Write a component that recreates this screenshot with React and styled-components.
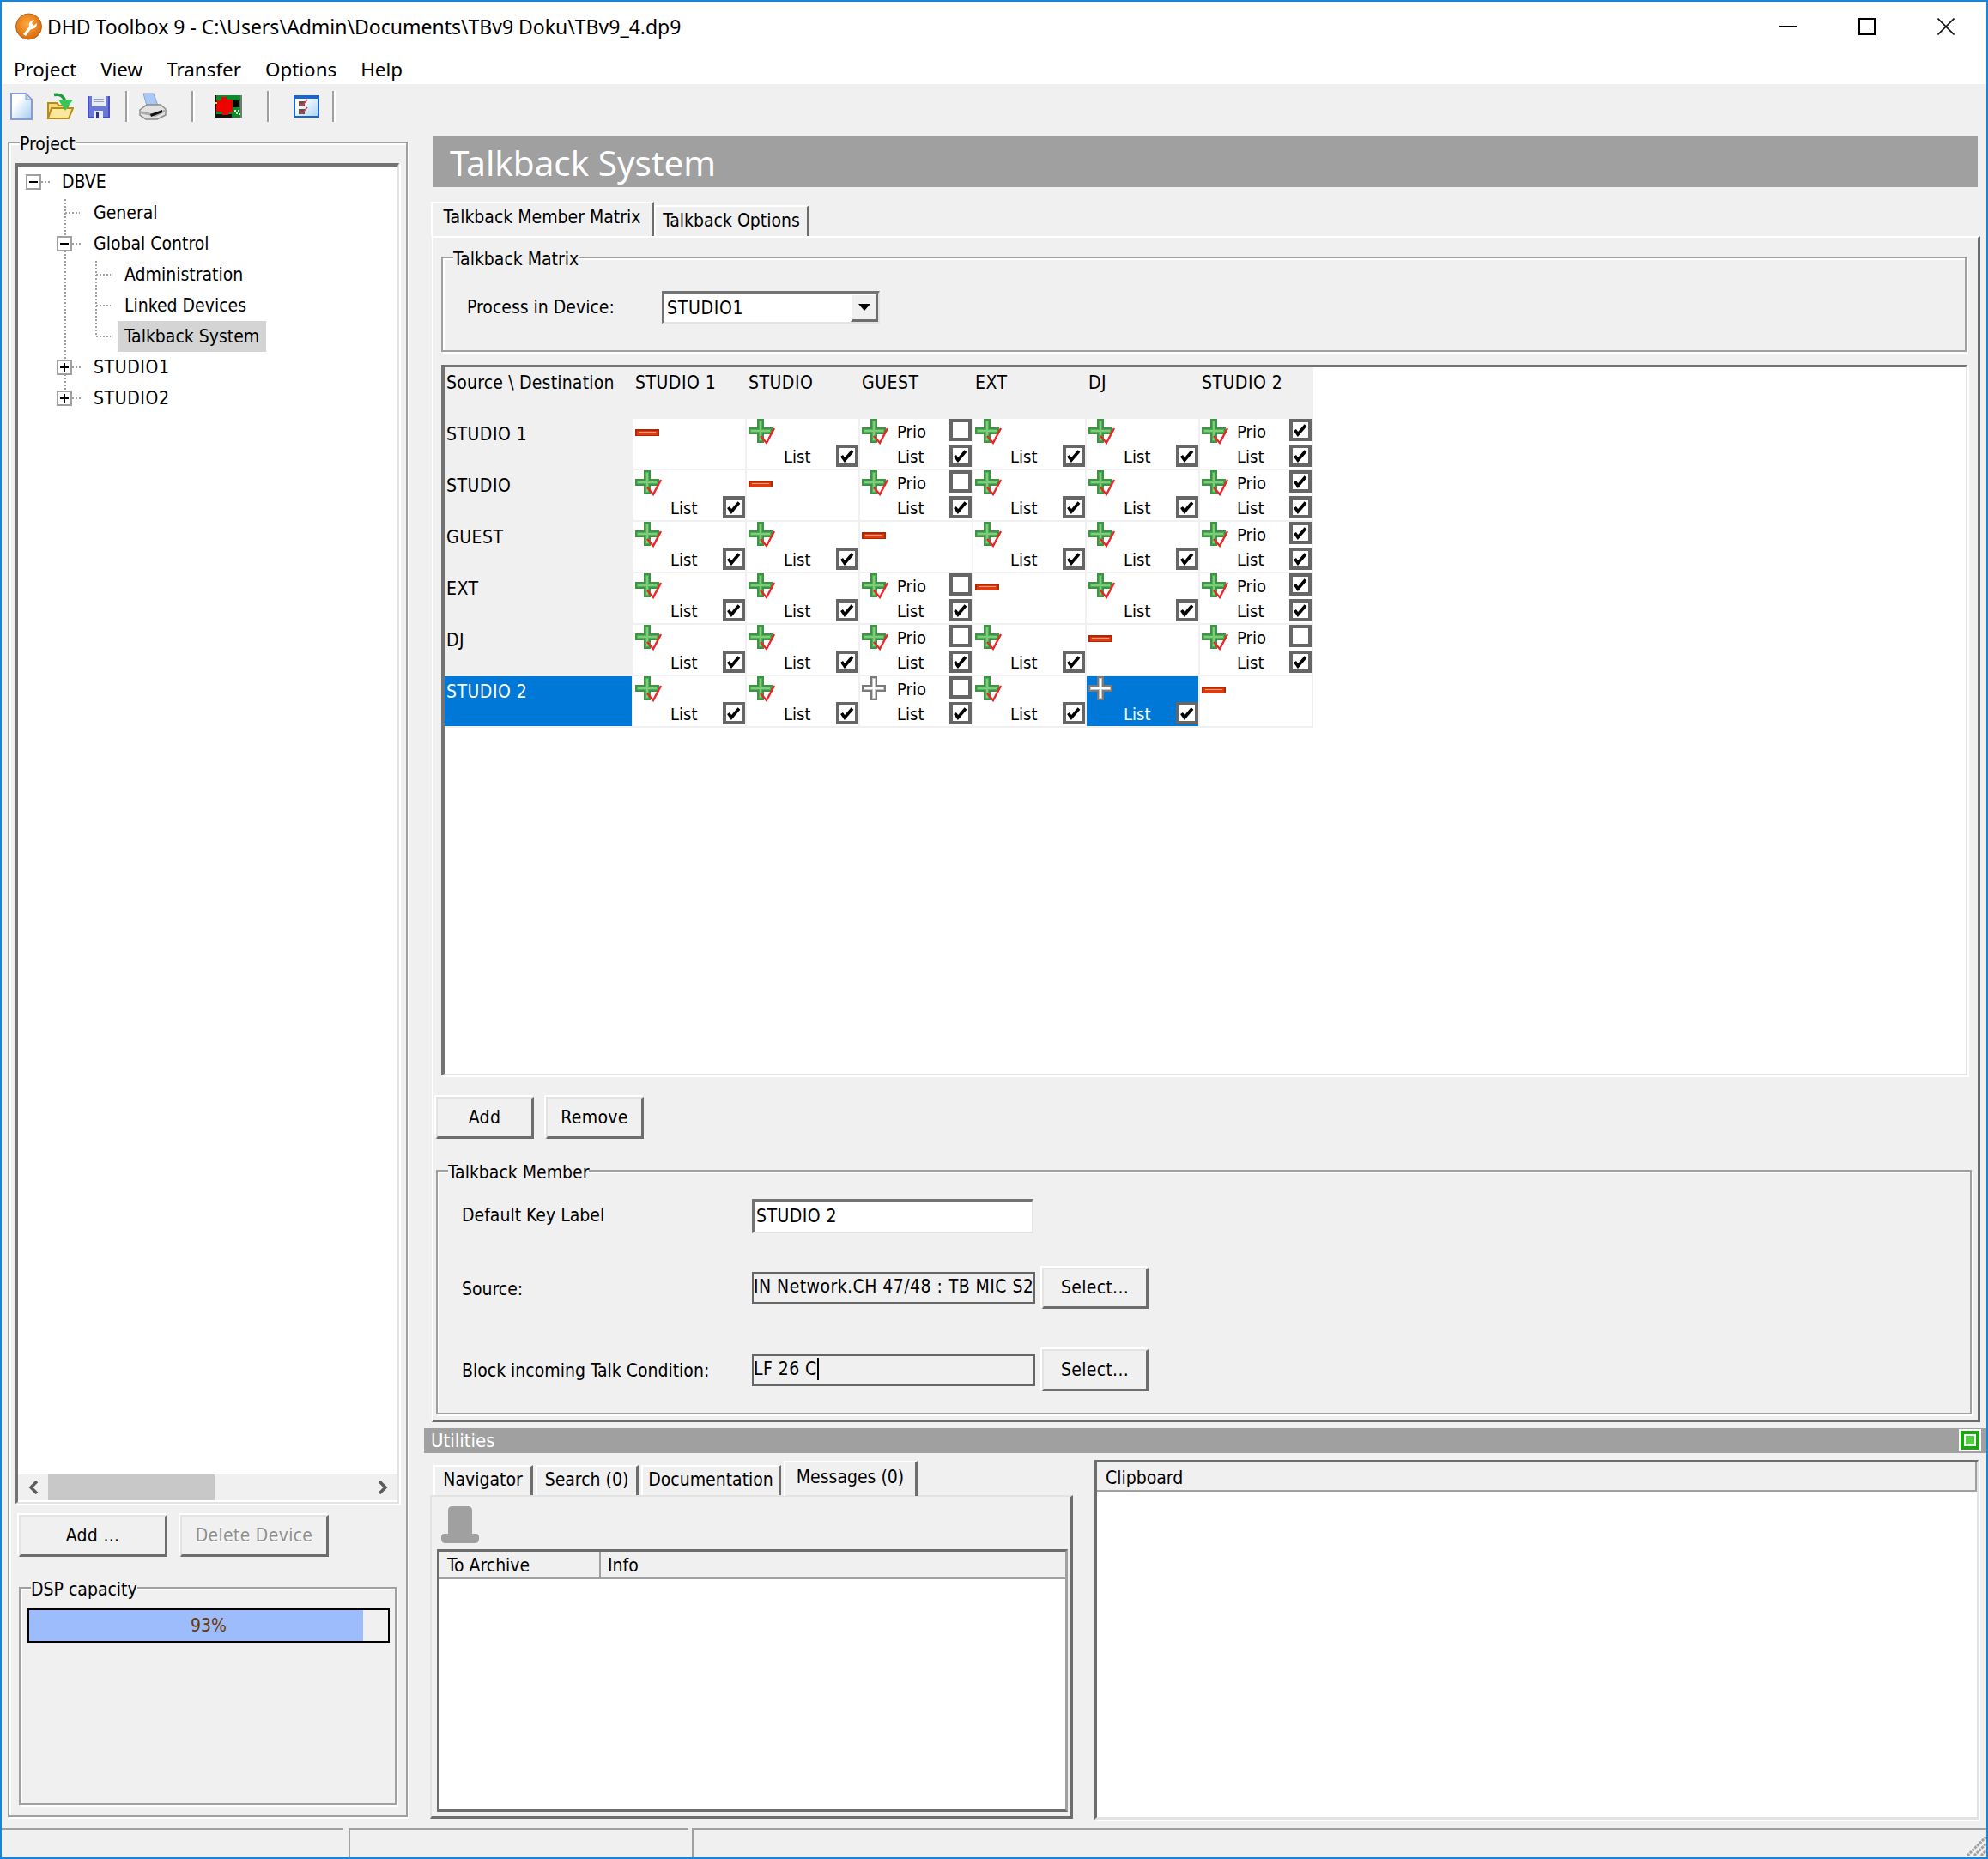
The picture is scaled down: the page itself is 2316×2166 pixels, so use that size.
import React from 'react';
import styled, { createGlobalStyle } from 'styled-components';

const GlobalStyle = createGlobalStyle`
  html, body { margin: 0; background: #f0f0f0; }
  * { box-sizing: border-box; }
  #root { width: 2316px; height: 2166px; }
`;

const Frame = styled.div`
  width: 2316px;
  height: 2166px;
  border: 2px solid #1a84d8;
  background: #f0f0f0;
  display: flex;
  flex-direction: column;
  font-family: "DejaVu Sans Condensed", "DejaVu Sans", "Noto Sans", sans-serif;
  font-size: 21px;
  color: #000;
  overflow: hidden;
`;

const TitleBar = styled.div`
  height: 62px;
  background: #fff;
  display: flex;
  align-items: center;
  padding: 0 37px 4px 16px;
  font-family: "Noto Sans", sans-serif;
  font-size: 23px;
`;
const TitleText = styled.span`
  margin-left: 6px;
  white-space: nowrap;
`;
const WinControls = styled.div`
  margin-left: auto;
  display: flex;
  gap: 72px;
`;
const MenuBar = styled.div`
  height: 34px;
  background: #fff;
  display: flex;
  align-items: center;
  gap: 28px;
  padding-left: 14px;
  font-family: "Noto Sans", sans-serif;
  font-size: 22.4px;
`;
const Toolbar = styled.div`
  height: 56px;
  display: flex;
  align-items: center;
  gap: 16px;
  padding: 0 0 4px 10px;
`;
const ToolSep = styled.span`
  width: 2px;
  height: 36px;
  background: #a0a0a0;
  box-shadow: 2px 0 0 #fff;
  margin-left: ${(p) => p.$ml || 0}px;
  margin-right: ${(p) => p.$mr || 0}px;
`;

const Body = styled.div`
  height: 1976px;
  display: flex;
`;
const LeftPane = styled.div`
  width: 492px;
  padding: 11px 0 0 7px;
`;
const RightPane = styled.div`
  width: 1820px;
  padding-top: 4px;
`;

const Group = styled.div`
  position: relative;
  width: ${(p) => p.$w}px;
  height: ${(p) => p.$h}px;
  margin: ${(p) => p.$m || '0'};
  padding: ${(p) => p.$p || '0'};
  border: 2px solid #a0a0a0;
  box-shadow: 2px 2px 0 #fff, inset 2px 2px 0 #fff;
`;
const Legend = styled.span`
  position: absolute;
  top: -12px;
  left: ${(p) => p.$left || 12}px;
  background: #f0f0f0;
  line-height: 26px;
  white-space: nowrap;
`;

const TreeBox = styled.div`
  width: 447px;
  height: 1562px;
  display: flex;
  flex-direction: column;
  border-style: solid;
  border-width: 4px 2px 2px 3px;
  border-color: #737373 #e3e3e3 #e3e3e3 #737373;
  box-shadow: 2px 2px 0 #fff;
  background: #fff;
`;
const TreeList = styled.div`
  position: relative;
  flex: 1;
`;
const TreeLines = styled.svg`
  position: absolute;
  left: 0;
  top: 0;
`;
const TreeRow = styled.div`
  position: relative;
  height: 36px;
  display: flex;
  align-items: center;
  padding-left: ${(p) => p.$indent}px;
`;
const Expander = styled.span`
  position: relative;
  flex: none;
  width: 18px;
  height: 18px;
  margin-left: ${(p) => -p.$back}px;
  margin-right: ${(p) => p.$back - 18}px;
  border: 2px solid #a0a0a0;
  background: #fff;
  &::before {
    content: '';
    position: absolute;
    left: 2px;
    top: 6px;
    width: 10px;
    height: 2px;
    background: #000;
  }
  &::after {
    content: '';
    display: ${(p) => (p.$open ? 'none' : 'block')};
    position: absolute;
    left: 6px;
    top: 2px;
    width: 2px;
    height: 10px;
    background: #000;
  }
`;
const TreeLabel = styled.span`
  position: relative;
  padding: 0 8px;
  line-height: 36px;
  letter-spacing: ${(p) => (p.$caps ? 0.6 : 0)}px;
  background: ${(p) => (p.$active ? '#d4d4d4' : 'transparent')};
`;
const HScroll = styled.div`
  height: 30px;
  margin-bottom: 2px;
  background: #f0f0f0;
  display: flex;
  align-items: center;
`;
const ScrollArrow = styled.span`
  flex: none;
  width: 35px;
  display: flex;
  justify-content: center;
`;
const ScrollThumb = styled.span`
  width: 194px;
  height: 30px;
  background: #c8c8c8;
`;
const ScrollRest = styled.span`
  flex: 1;
`;

const Button = styled.div`
  width: ${(p) => p.$w}px;
  height: ${(p) => p.$h || 49}px;
  display: flex;
  align-items: center;
  justify-content: center;
  letter-spacing: 0.3px;
  background: #f0f0f0;
  border-style: solid;
  border-width: 2px 3px 3px 2px;
  border-color: #e3e3e3 #6d6d6d #6d6d6d #e3e3e3;
  box-shadow: -2px -2px 0 #fff;
  color: ${(p) => (p.$disabled ? '#8f8f8f' : '#000')};
  text-shadow: ${(p) => (p.$disabled ? '1px 1px 0 #fff' : 'none')};
`;
const ButtonRow = styled.div`
  display: flex;
  gap: ${(p) => p.$gap}px;
  margin: ${(p) => p.$m};
`;

const Progress = styled.div`
  position: relative;
  width: 422px;
  height: 40px;
  border: 2px solid #000;
  background: #f0f0f0;
  display: flex;
  align-items: center;
  justify-content: center;
`;
const ProgressFill = styled.span`
  position: absolute;
  left: 0;
  top: 0;
  bottom: 0;
  background: #9cbcfc;
`;
const ProgressText = styled.span`
  position: relative;
  color: #6b3a00;
`;

const Heading = styled.div`
  height: 60px;
  margin: 0 10px;
  background: #a0a0a0;
  color: #fff;
  display: flex;
  align-items: center;
  padding: 4px 0 0 20px;
  font-family: "Noto Sans", sans-serif;
  font-size: 40.4px;
`;
const TabBar = styled.div`
  display: flex;
  align-items: flex-end;
  height: ${(p) => p.$h}px;
  margin: ${(p) => p.$m};
  gap: ${(p) => p.$gap || 0}px;
`;
const Tab = styled.div`
  height: ${(p) => p.$h}px;
  width: ${(p) => p.$w}px;
  display: flex;
  align-items: center;
  justify-content: center;
  padding-bottom: ${(p) => (p.$raised ? 5 : 2)}px;
  white-space: nowrap;
  border-style: solid;
  border-width: 2px 3px 0 2px;
  border-color: #fff #6d6d6d #fff #fff;
  margin-bottom: ${(p) => (p.$up ? -1 : 0)}px;
  position: relative;
`;
const TabPanel = styled.div`
  width: 1804px;
  height: 1382px;
  margin-left: 9px;
  padding: 22px 0 0 9px;
  border-style: solid;
  border-width: 2px 3px 3px 2px;
  border-color: #fff #6d6d6d #6d6d6d #fff;
`;
const FormRow = styled.div`
  display: flex;
  align-items: center;
  height: ${(p) => p.$h}px;
  padding-left: ${(p) => p.$left}px;
  margin-top: ${(p) => p.$top}px;
`;
const FieldLabel = styled.span`
  width: ${(p) => p.$w}px;
  flex: none;
  position: relative;
  top: ${(p) => p.$dy || 0}px;
`;
const Combo = styled.div`
  width: 254px;
  height: 38px;
  display: flex;
  background: #fff;
  border-style: solid;
  border-width: 3px 2px 2px 3px;
  border-color: #737373 #e3e3e3 #e3e3e3 #737373;
`;
const ComboText = styled.span`
  flex: 1;
  padding-left: 3px;
  line-height: 34px;
  letter-spacing: 0.7px;
`;
const ComboButton = styled.span`
  width: 32px;
  display: flex;
  align-items: center;
  justify-content: center;
  background: #f0f0f0;
  border-style: solid;
  border-width: 2px 3px 3px 2px;
  border-color: #fff #6d6d6d #6d6d6d #fff;
  &::after {
    content: '';
    border-style: solid;
    border-width: 8px 7px 0;
    border-color: #000 transparent transparent;
  }
`;

const MatrixBox = styled.div`
  width: 1778px;
  height: 828px;
  margin-top: 15px;
  background: #fff;
  border-style: solid;
  border-width: 3px 2px 2px 4px;
  border-color: #737373 #e3e3e3 #e3e3e3 #737373;
  box-shadow: 2px 2px 0 #fff;
`;
const MatrixGrid = styled.div`
  display: inline-grid;
  grid-template-columns: 218px repeat(6, 130px);
  grid-auto-rows: 58px;
  gap: 2px;
  padding: 0 2px 2px 0;
  background: #f0f0f0;
`;
const HeadCell = styled.div`
  background: ${(p) => (p.$selected ? '#0078d7' : '#f0f0f0')};
  color: ${(p) => (p.$selected ? '#fff' : '#000')};
  padding-left: 2px;
  line-height: 36px;
  letter-spacing: ${(p) => (p.$tight ? 0.2 : 0.5)}px;
  white-space: nowrap;
`;
const MemberCell = styled.div`
  display: grid;
  grid-template-columns: 43px 1fr 26px;
  grid-template-rows: 30px 28px;
  background: ${(p) => (p.$selected ? '#0078d7' : '#fff')};
  color: ${(p) => (p.$selected ? '#fff' : '#000')};
`;
const CellLabel = styled.span`
  align-self: center;
  font-size: 20px;
  line-height: 28px;
`;
const CheckBox = styled.span`
  width: 26px;
  height: 26px;
  align-self: start;
  border: 4px solid #666;
  background: #fff;
  display: flex;
`;

const TextField = styled.div`
  flex: none;
  width: ${(p) => (p.$plain ? 328 : 330)}px;
  height: ${(p) => (p.$plain ? 40 : 37)}px;
  margin-right: 8px;
  padding: ${(p) => (p.$plain ? '0 0 0 2px' : '0 0 3px 0')};
  display: flex;
  align-items: center;
  white-space: nowrap;
  overflow: hidden;
  letter-spacing: 0.45px;
  background: ${(p) => (p.$plain ? '#fff' : '#f0f0f0')};
  border-style: solid;
  border-width: ${(p) => (p.$plain ? '3px 2px 2px 3px' : '2px')};
  border-color: ${(p) => (p.$plain ? '#737373 #e3e3e3 #e3e3e3 #737373' : '#666')};
`;
const Caret = styled.span`
  width: 2px;
  height: 26px;
  background: #000;
`;

const UtilBar = styled.div`
  height: 29px;
  margin-top: 7px;
  padding: 0 6px 0 8px;
  background: #a0a0a0;
  color: #fff;
  display: flex;
  align-items: center;
  justify-content: space-between;
  font-size: 22px;
`;
const BottomRow = styled.div`
  display: flex;
  gap: 25px;
  margin: 8px 0 0 7px;
`;
const UtilWidget = styled.div`
  width: 749px;
`;
const UtilPanel = styled.div`
  height: 377px;
  display: flex;
  flex-direction: column;
  padding: 11px 0 5px 6px;
  border-style: solid;
  border-width: 2px 3px 3px 2px;
  border-color: #e3e3e3 #6d6d6d #6d6d6d #e3e3e3;
`;
const ArchiveIcon = styled.svg`
  flex: none;
  margin-left: 5px;
`;
const ListBox = styled.div`
  width: 735px;
  flex: 1;
  margin-top: 7px;
  background: #fff;
  border-style: solid;
  border-width: 3px;
  border-color: #6d6d6d #a0a0a0 #6d6d6d #6d6d6d;
`;
const ListHead = styled.div`
  height: 32px;
  display: flex;
  background: #f0f0f0;
  border-bottom: 2px solid #a0a0a0;
`;
const ListCol = styled.span`
  width: ${(p) => p.$w || 'auto'};
  flex: ${(p) => (p.$w ? 'none' : 1)};
  padding-left: ${(p) => p.$pad}px;
  line-height: 32px;
  border-right: ${(p) => (p.$w ? '2px solid #a0a0a0' : 'none')};
`;
const ClipboardBox = styled.div`
  width: 1030px;
  height: 419px;
  background: #fff;
  border-style: solid;
  border-width: 3px 2px 3px 3px;
  border-color: #6d6d6d #e3e3e3 #e3e3e3 #6d6d6d;
  box-shadow: 2px 2px 0 #fff;
`;
const ClipboardHead = styled.div`
  height: 34px;
  padding-left: 10px;
  line-height: 36px;
  background: #f0f0f0;
  border-style: solid;
  border-width: 0 2px 2px 0;
  border-color: #a0a0a0;
`;

const StatusBar = styled.div`
  position: relative;
  height: 34px;
  display: flex;
  margin-top: 2px;
`;
const StatusPane = styled.div`
  width: ${(p) => p.$w}px;
  margin-right: ${(p) => p.$mr || 0}px;
  border-top: 2px solid #a0a0a0;
  border-left: ${(p) => (p.$first ? 'none' : '2px solid #a0a0a0')};
`;
const Grip = styled.svg`
  position: absolute;
  right: 0;
  bottom: 2px;
`;

const TickMark = () => (
  <svg width="18" height="18" viewBox="0 0 18 18">
    <path d="M2.5 9l3.5 5L15 3.5" fill="none" stroke="#000" strokeWidth="3.6" />
  </svg>
);

const Check = ({ on, row, col }) => (
  <CheckBox style={{ gridRow: row, gridColumn: col }}>{on && <TickMark />}</CheckBox>
);

const PlusIcon = ({ gray }) => {
  const dark = gray ? '#7a7a7a' : '#3d9444';
  const mid = gray ? '#c4c4c4' : '#55ad58';
  const light = gray ? '#fff' : '#7fcc7c';
  return (
    <svg width="32" height="30" viewBox="0 0 32 30" shapeRendering="crispEdges" style={{ marginLeft: 2, gridRow: 1, gridColumn: 1 }}>
      <path d="M10 0h8v10h10v8H18v10h-8V18H0v-8h10z" fill={dark} />
      <path d="M12 2h4v10h10v4H16v10h-4V16H2v-4h10z" fill={mid} />
      <path d="M13 3h2v10h10v2H15v10h-2V15H3v-2h10z" fill={light} />
      {!gray && <path d="M14 20l7 8 9-17" fill="none" stroke="#ee2428" strokeWidth="2.4" shapeRendering="auto" />}
    </svg>
  );
};

const MinusIcon = () => (
  <svg width="28" height="8" viewBox="0 0 28 8" shapeRendering="crispEdges" style={{ margin: '12px 0 0 2px', gridRow: 1, gridColumn: 1 }}>
    <rect x="0" y="0" width="28" height="8" fill="#a82a08" />
    <rect x="2" y="2" width="24" height="5" fill="#e03a10" />
    <rect x="4" y="3" width="20" height="1" fill="#ff9a80" />
  </svg>
);

// kind: off = minus, list = plus + list, prio = plus + prio + list
const Member = ({ kind, prio, gray, selected }) => {
  if (kind === 'off') {
    return (
      <MemberCell>
        <MinusIcon />
      </MemberCell>
    );
  }
  return (
    <MemberCell $selected={selected}>
      <PlusIcon gray={gray} />
      {kind === 'prio' && (
        <>
          <CellLabel style={{ gridRow: 1, gridColumn: 2 }}>Prio</CellLabel>
          <Check on={prio} row={1} col={3} />
        </>
      )}
      <CellLabel style={{ gridRow: 2, gridColumn: 2 }}>List</CellLabel>
      <Check on row={2} col={3} />
    </MemberCell>
  );
};

const columns = ['STUDIO 1', 'STUDIO', 'GUEST', 'EXT', 'DJ', 'STUDIO 2'];
const L = { kind: 'list' };
const P = { kind: 'prio', prio: true };
const U = { kind: 'prio', prio: false };
const O = { kind: 'off' };
const rows = [
  { name: 'STUDIO 1', cells: [O, L, U, L, L, P] },
  { name: 'STUDIO', cells: [L, O, U, L, L, P] },
  { name: 'GUEST', cells: [L, L, O, L, L, P] },
  { name: 'EXT', cells: [L, L, U, O, L, P] },
  { name: 'DJ', cells: [L, L, U, L, O, U] },
  {
    name: 'STUDIO 2',
    selected: true,
    cells: [L, L, { ...U, gray: true }, L, { kind: 'list', gray: true, selected: true }, O],
  },
];

const AppIcon = () => (
  <svg width="31" height="32" viewBox="0 0 31 32">
    <defs>
      <radialGradient id="appGlow" cx="45%" cy="40%" r="60%">
        <stop offset="0" stopColor="#ffab3c" />
        <stop offset="1" stopColor="#dd6a10" />
      </radialGradient>
    </defs>
    <circle cx="15.5" cy="16" r="15" fill="url(#appGlow)" stroke="#a8691f" />
    <path d="M9 25l7-9c-1-4 1-7 6-8l-3 4 2 3 4-3c0 5-3 7-7 7l-6 8z" fill="#fff" />
  </svg>
);

const NewIcon = () => (
  <svg width="26" height="32" viewBox="0 0 26 32">
    <defs>
      <linearGradient id="docFill" x1="0" y1="0" x2="1" y2="1">
        <stop offset="0.3" stopColor="#fff" />
        <stop offset="1" stopColor="#9fcdf0" />
      </linearGradient>
    </defs>
    <path d="M1 1h17l7 7v23H1z" fill="url(#docFill)" stroke="#8a9bd0" strokeWidth="2" />
    <path d="M18 1v7h7z" fill="#bcd8f2" stroke="#8a9bd0" />
  </svg>
);

const OpenIcon = () => (
  <svg width="32" height="32" viewBox="0 0 32 32">
    <path d="M2 30V12h10l3 3h10v15z" fill="#f5d97c" stroke="#b98c12" strokeWidth="2" />
    <path d="M2 30l4-12h25l-5 12z" fill="#fbe89e" stroke="#b98c12" strokeWidth="2" />
    <path d="M9 2.5c7-1 11 1 13 8" fill="none" stroke="#1e9c3c" strokeWidth="3.5" />
    <path d="M14 8h17l-9 13z" fill="#38c45a" />
  </svg>
);

const SaveIcon = () => (
  <svg width="26" height="28" viewBox="0 0 26 28" shapeRendering="crispEdges">
    <path d="M0 2h26v26H0z" fill="#4450b8" />
    <path d="M2 2h22v24H2z" fill="#6a78d8" />
    <path d="M5 2h16v12H5z" fill="#e8ecf4" />
    <path d="M7 5h12v1H7zM7 8h12v1H7z" fill="#98a0c0" />
    <path d="M8 19h10v9H8z" fill="#e8ecf4" />
    <path d="M10 21h3v6h-3z" fill="#2a3490" />
  </svg>
);

const PrintIcon = () => (
  <svg width="32" height="32" viewBox="0 0 32 32">
    <path d="M5 1h12l5 14H9z" fill="#a9c8f5" stroke="#8aa0d0" />
    <path d="M1 20l8-6h16l6 5v7l-10 5H8l-7-5z" fill="#e2e2e2" stroke="#8a8a8a" strokeWidth="1.5" />
    <path d="M1 21l18 4 12-6v3l-12 6-18-4z" fill="#a8a8a8" />
    <path d="M13 25l14-5v3l-13 5z" fill="#111" />
  </svg>
);

const ChipIcon = () => (
  <svg width="32" height="26" viewBox="0 0 32 26" shapeRendering="crispEdges">
    <path d="M0 0h32v26H0z" fill="#0d8a2a" />
    <path d="M0 0h2v26H0zM0 22h20v4H0z" fill="#111" />
    <path d="M2 6h6V2h6v3h7v15h-5v3h-7v-4H2z" fill="#f00000" />
    <path d="M1 8h2v2H1z" fill="#e8e820" />
    <path d="M22 6h7v8h-7z" fill="#000" />
    <path d="M23 17h2v2h-2zM27 17h2v2h-2zM25 20h2v2h-2zM29 21h2v2h-2z" fill="#e8f0e8" />
    <path d="M30 0h2v26h-2z" fill="#777" />
  </svg>
);

const ChecklistIcon = () => (
  <svg width="30" height="26" viewBox="0 0 30 26">
    <defs>
      <linearGradient id="listFill" x1="0" y1="0" x2="1" y2="1">
        <stop offset="0.25" stopColor="#fff" />
        <stop offset="1" stopColor="#a8d4f4" />
      </linearGradient>
    </defs>
    <rect x="1" y="1" width="28" height="24" fill="url(#listFill)" stroke="#1466d2" strokeWidth="2" />
    <rect x="1" y="1" width="28" height="3" fill="#1466d2" />
    <rect x="6" y="7" width="7" height="6" fill="#555" />
    <rect x="6" y="16" width="7" height="6" fill="#555" />
    <path d="M7 9l3 3 6-7M7 18l3 3 6-7" fill="none" stroke="#d84040" strokeWidth="1.6" />
  </svg>
);

const WinMin = () => (
  <svg width="20" height="20" viewBox="0 0 20 20"><rect y="9" width="20" height="2" fill="#000" /></svg>
);
const WinMax = () => (
  <svg width="20" height="20" viewBox="0 0 20 20"><rect x="1" y="1" width="18" height="18" fill="none" stroke="#000" strokeWidth="2" /></svg>
);
const WinClose = () => (
  <svg width="20" height="20" viewBox="0 0 20 20"><path d="M0.5 0.5l19 19M19.5 0.5l-19 19" stroke="#111" strokeWidth="1.6" /></svg>
);

const Chevron = ({ dir }) => (
  <svg width="12" height="16" viewBox="0 0 12 16">
    <path d={dir === 'left' ? 'M10 1L3 8l7 7' : 'M2 1l7 7-7 7'} fill="none" stroke="#5c5c5c" strokeWidth="3.5" />
  </svg>
);

const App = () => {
  return (
    <Frame>
      <GlobalStyle />
      <TitleBar>
        <AppIcon />
        <TitleText>DHD Toolbox 9 - C:\Users\Admin\Documents\TBv9 Doku\TBv9_4.dp9</TitleText>
        <WinControls>
          <WinMin />
          <WinMax />
          <WinClose />
        </WinControls>
      </TitleBar>
      <MenuBar>
        <span>Project</span>
        <span>View</span>
        <span>Transfer</span>
        <span>Options</span>
        <span>Help</span>
      </MenuBar>
      <Toolbar>
        <NewIcon />
        <OpenIcon />
        <SaveIcon />
        <ToolSep $ml={2} $mr={-2} />
        <PrintIcon />
        <ToolSep $ml={13} $mr={9} />
        <ChipIcon />
        <ToolSep $ml={13} $mr={13} />
        <ChecklistIcon />
        <ToolSep $ml={-1} />
      </Toolbar>
      <Body>
        <LeftPane>
          <Group $w={466} $h={1952} $p="23px 0 0 7px">
            <Legend>Project</Legend>
            <TreeBox>
              <TreeList>
                <TreeLines width="300" height="300" viewBox="0 0 300 300" fill="none" stroke="#a0a0a0" strokeDasharray="2 2" strokeWidth="2">
                  <path d="M27 18h10M55 38v232M55 54h17M63 90h10M63 234h10M63 270h10M91 110v88M91 126h17M91 162h17M91 198h17" />
                </TreeLines>
                <TreeRow $indent={43}>
                  <Expander $open $back={34} />
                  <TreeLabel>DBVE</TreeLabel>
                </TreeRow>
                <TreeRow $indent={80}>
                  <TreeLabel>General</TreeLabel>
                </TreeRow>
                <TreeRow $indent={80}>
                  <Expander $open $back={35} />
                  <TreeLabel>Global Control</TreeLabel>
                </TreeRow>
                <TreeRow $indent={116}>
                  <TreeLabel>Administration</TreeLabel>
                </TreeRow>
                <TreeRow $indent={116}>
                  <TreeLabel>Linked Devices</TreeLabel>
                </TreeRow>
                <TreeRow $indent={116}>
                  <TreeLabel $active>Talkback System</TreeLabel>
                </TreeRow>
                <TreeRow $indent={80}>
                  <Expander $back={35} />
                  <TreeLabel $caps>STUDIO1</TreeLabel>
                </TreeRow>
                <TreeRow $indent={80}>
                  <Expander $back={35} />
                  <TreeLabel $caps>STUDIO2</TreeLabel>
                </TreeRow>
              </TreeList>
              <HScroll>
                <ScrollArrow><Chevron dir="left" /></ScrollArrow>
                <ScrollThumb />
                <ScrollRest />
                <ScrollArrow><Chevron dir="right" /></ScrollArrow>
              </HScroll>
            </TreeBox>
            <ButtonRow $gap={15} $m="13px 0 0 4px">
              <Button $w={173}>Add ...</Button>
              <Button $w={173} $disabled>Delete Device</Button>
            </ButtonRow>
            <Group $w={440} $h={254} $m="35px 0 0 4px" $p="23px 0 0 8px">
              <Legend>DSP capacity</Legend>
              <Progress>
                <ProgressFill style={{ width: '93%' }} />
                <ProgressText>93%</ProgressText>
              </Progress>
            </Group>
          </Group>
        </LeftPane>
        <RightPane>
          <Heading>Talkback System</Heading>
          <TabBar $h={40} $m="17px 0 0 8px">
            <Tab $h={40} $w={260} $raised>Talkback Member Matrix</Tab>
            <Tab $h={36} $w={181}>Talkback Options</Tab>
          </TabBar>
          <TabPanel>
            <Group $w={1777} $h={111}>
              <Legend>Talkback Matrix</Legend>
              <FormRow $h={38} $top={38} $left={28}>
                <FieldLabel $w={227}>Process in Device:</FieldLabel>
                <Combo>
                  <ComboText>STUDIO1</ComboText>
                  <ComboButton />
                </Combo>
              </FormRow>
            </Group>
            <MatrixBox>
              <MatrixGrid>
                <HeadCell $tight>Source \ Destination</HeadCell>
                {columns.map((c, i) => (
                  <HeadCell key={i}>{c}</HeadCell>
                ))}
                {rows.map((r, i) => (
                  <React.Fragment key={i}>
                    <HeadCell $selected={r.selected}>{r.name}</HeadCell>
                    {r.cells.map((c, j) => (
                      <Member key={j} {...c} />
                    ))}
                  </React.Fragment>
                ))}
              </MatrixGrid>
            </MatrixBox>
            <ButtonRow $gap={14} $m="25px 0 0 -6px">
              <Button $w={114}>Add</Button>
              <Button $w={114}>Remove</Button>
            </ButtonRow>
            <Group $w={1789} $h={285} $m="36px 0 0 -6px">
              <Legend>Talkback Member</Legend>
              <FormRow $h={40} $top={32} $left={28}>
                <FieldLabel $w={338} $dy={-1}>Default Key Label</FieldLabel>
                <TextField $plain>STUDIO 2</TextField>
              </FormRow>
              <FormRow $h={48} $top={40} $left={28}>
                <FieldLabel $w={338} $dy={1}>Source:</FieldLabel>
                <TextField>IN Network.CH 47/48 : TB MIC S2</TextField>
                <Button $w={124} $h={48}>Select...</Button>
              </FormRow>
              <FormRow $h={49} $top={47} $left={28}>
                <FieldLabel $w={338} $dy={1}>Block incoming Talk Condition:</FieldLabel>
                <TextField>LF 26 C<Caret /></TextField>
                <Button $w={124} $h={49}>Select...</Button>
              </FormRow>
            </Group>
          </TabPanel>
          <UtilBar>
            <span>Utilities</span>
            <svg width="26" height="26" viewBox="0 0 26 26" shapeRendering="crispEdges">
              <rect width="26" height="26" fill="#fff" />
              <rect x="2" y="2" width="22" height="22" fill="#16a80c" />
              <rect x="6" y="6" width="14" height="14" fill="#fff" />
              <rect x="8" y="8" width="10" height="10" fill="#52d040" />
            </svg>
          </UtilBar>
          <BottomRow>
            <UtilWidget>
              <TabBar $h={41} $m="0 0 0 4px" $gap={3}>
                <Tab $h={35} $w={116}>Navigator</Tab>
                <Tab $h={35} $w={120}>Search (0)</Tab>
                <Tab $h={35} $w={163}>Documentation</Tab>
                <Tab $h={41} $w={156} $up $raised>Messages (0)</Tab>
              </TabBar>
              <UtilPanel>
                <ArchiveIcon width="44" height="43" viewBox="0 0 44 43">
                  <path d="M8 5q0-5 5-5h18q5 0 5 5v27h4q4 0 4 4v2q0 5-5 5H5q-5 0-5-5v-2q0-4 4-4h4z" fill="#a0a0a0" />
                </ArchiveIcon>
                <ListBox>
                  <ListHead>
                    <ListCol $w="188px" $pad={9}>To Archive</ListCol>
                    <ListCol $pad={8}>Info</ListCol>
                  </ListHead>
                </ListBox>
              </UtilPanel>
            </UtilWidget>
            <ClipboardBox>
              <ClipboardHead>Clipboard</ClipboardHead>
            </ClipboardBox>
          </BottomRow>
        </RightPane>
      </Body>
      <StatusBar>
        <StatusPane $w={398} $mr={6} $first />
        <StatusPane $w={396} $mr={4} />
        <StatusPane $w={1508} />
        <Grip width="22" height="22" viewBox="0 0 22 22" stroke="#a0a0a0" strokeWidth="3" strokeDasharray="3 1">
          <path d="M0 22L22 0M8 22L22 8M16 22l6-6" />
        </Grip>
      </StatusBar>
    </Frame>
  );
};

export default App;
